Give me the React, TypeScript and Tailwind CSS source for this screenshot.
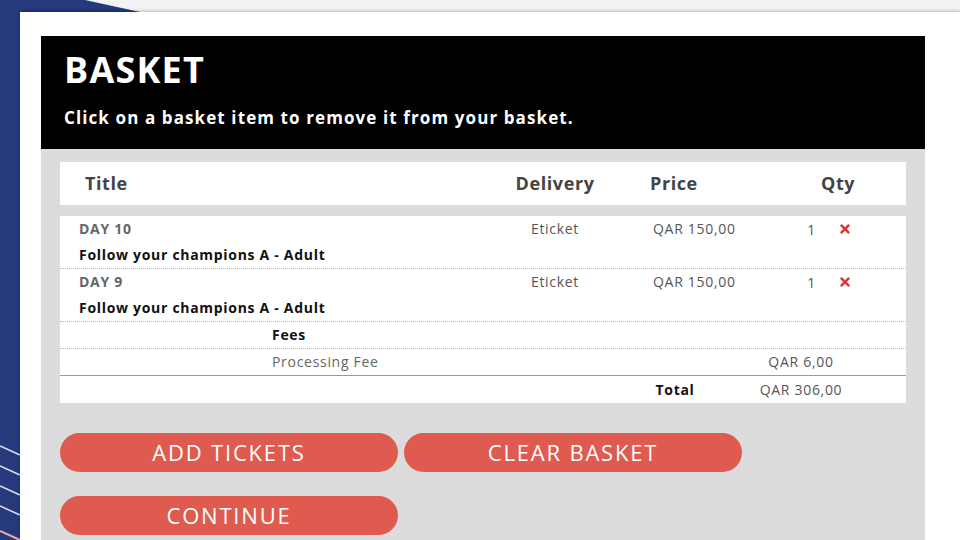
import { FaTimes } from 'react-icons/fa';

const items = [
  { day: 'DAY 10', name: 'Follow your champions A - Adult', delivery: 'Eticket', price: 'QAR 150,00', qty: 1 },
  { day: 'DAY 9', name: 'Follow your champions A - Adult', delivery: 'Eticket', price: 'QAR 150,00', qty: 1 },
];

function Backdrop() {
  return (
    <svg className="absolute inset-0" width="960" height="540" viewBox="0 0 960 540">
      <polygon points="0,0 85,0 140,12 20,12 20,540 0,540" fill="#263a7b" />
      {[446, 466, 486, 506].map((y) => (
        <line key={y} x1="0" y1={y} x2="20" y2={y + 9} stroke="#ffffff" strokeWidth="1.5" opacity="0.85" />
      ))}
      <line x1="0" y1="531" x2="20" y2="540" stroke="#f0a8a0" strokeWidth="2" />
    </svg>
  );
}

export default function App() {
  return (
    <div className="relative w-[960px] h-[540px] overflow-hidden bg-[#f3f3f3] font-['Open_Sans',sans-serif]">
      <Backdrop />
      <div className="relative ml-[20px] mt-[12px] h-[528px] bg-white pl-[21px] pr-[35px] pt-[24px] shadow-[0_-1px_3px_rgba(0,0,0,0.25)]">
        {/* header */}
        <div className="h-[113px] bg-black px-[23px] pt-[13px]">
          <h1 className="text-[36px] font-bold leading-[42px] tracking-[1.2px] text-white">BASKET</h1>
          <p className="mt-[15px] text-[17px] font-bold leading-[24px] tracking-[1.1px] text-white">
            Click on a basket item to remove it from your basket.
          </p>
        </div>

        <div className="h-[391px] bg-[#dcdcdc] px-[19px] pt-[13px]">
          {/* column heads */}
          <div className="grid h-[43px] grid-cols-[430px_130px_150px_136px] items-center bg-white text-[18px] font-bold tracking-[0.6px] text-[#444]">
            <div className="pl-[25px]">Title</div>
            <div className="text-center">Delivery</div>
            <div className="pl-[30px]">Price</div>
            <div className="pl-[51px]">Qty</div>
          </div>

          <div className="mt-[11px] bg-white text-[14px] tracking-[0.7px]">
            {items.map((it, i) => (
              <div
                key={i}
                className="grid grid-cols-[430px_130px_150px_136px] border-b border-dotted border-[#b5b5b5]"
              >
                <div className="pl-[19px]">
                  <div className="h-[26px] leading-[26px] font-bold text-[#666]">{it.day}</div>
                  <div className="h-[26px] leading-[26px] font-bold text-[#111]">{it.name}</div>
                </div>
                <div className="h-[26px] text-center leading-[26px] text-[#555]">{it.delivery}</div>
                <div className="h-[26px] pl-[33px] leading-[26px] text-[#555]">{it.price}</div>
                <div className="flex h-[26px] items-center pl-[24px] text-[#555]">
                  <span className="w-[22px] text-right">{it.qty}</span>
                  <FaTimes className="ml-[22px] text-[#d8383c]" size={14} />
                </div>
              </div>
            ))}

            <div className="h-[27px] border-b border-dotted border-[#b5b5b5] pl-[212px] leading-[26px] font-bold text-[#111]">
              Fees
            </div>
            <div className="flex h-[27px] border-b border-[#9a9a9a] leading-[26px] text-[#666]">
              <div className="w-[681px] pl-[212px]">Processing Fee</div>
              <div className="w-[120px] text-center text-[#555]">QAR 6,00</div>
            </div>
            <div className="flex h-[27px] leading-[27px]">
              <div className="w-[560px]" />
              <div className="w-[110px] text-center font-bold text-[#111]">Total</div>
              <div className="w-[11px]" />
              <div className="w-[120px] text-center text-[#555]">QAR 306,00</div>
            </div>
          </div>

          {/* actions */}
          <div className="mt-[30px] flex flex-col gap-[24px]">
            <div className="flex gap-[6px]">
              <button className="h-[39px] w-[338px] rounded-full bg-[#e05b4f] text-[22px] leading-[39px] tracking-[1.8px] text-white">
                ADD TICKETS
              </button>
              <button className="h-[39px] w-[338px] rounded-full bg-[#e05b4f] text-[22px] leading-[39px] tracking-[1.8px] text-white">
                CLEAR BASKET
              </button>
            </div>
            <button className="h-[39px] w-[338px] rounded-full bg-[#e05b4f] text-[22px] leading-[39px] tracking-[1.8px] text-white">
              CONTINUE
            </button>
          </div>
        </div>
      </div>
    </div>
  );
}
